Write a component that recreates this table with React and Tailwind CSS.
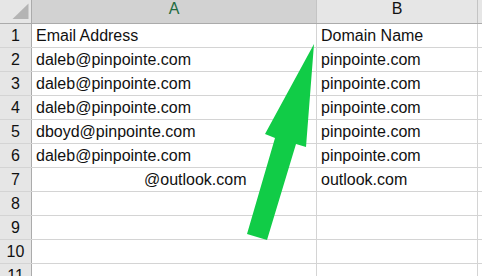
import React from 'react';

const rows = [
  { n: 1, a: 'Email Address', b: 'Domain Name' },
  { n: 2, a: 'daleb@pinpointe.com', b: 'pinpointe.com' },
  { n: 3, a: 'daleb@pinpointe.com', b: 'pinpointe.com' },
  { n: 4, a: 'daleb@pinpointe.com', b: 'pinpointe.com' },
  { n: 5, a: 'dboyd@pinpointe.com', b: 'pinpointe.com' },
  { n: 6, a: 'daleb@pinpointe.com', b: 'pinpointe.com' },
  { n: 7, a: '@outlook.com', b: 'outlook.com', pad: true },
  { n: 8 },
  { n: 9 },
  { n: 10 },
  { n: 11 },
];

const App = () => {
  return (
    <div
      className="relative w-[482px] h-[276px] overflow-hidden bg-white text-[16px] text-[#111]"
      style={{ fontFamily: '"Liberation Sans", Arial, sans-serif' }}
    >
      {/* column headers */}
      <div className="flex h-[24px] border-b border-[#ababab]">
        <div className="relative w-[32px] shrink-0 bg-[#e6e6e6] border-r border-[#ababab]">
          <svg className="absolute left-0 top-0" width="31" height="23">
            <polygon points="12.5,19 28.5,3.5 28.5,19" fill="#b4b4b4" />
          </svg>
        </div>
        <div className="w-[285px] shrink-0 bg-[#d2d2d2] border-r border-[#c4c4c4] flex items-end justify-center pb-[2px] text-[#1e6b3f]">
          A
        </div>
        <div className="w-[161px] shrink-0 bg-[#e6e6e6] border-r border-[#c4c4c4] flex items-end justify-center pb-[2px]">
          B
        </div>
        <div className="flex-1 bg-[#e6e6e6]" />
      </div>

      {/* rows */}
      {rows.map((r) => (
        <div key={r.n} className="flex h-[24px] border-b border-[#d4d4d4]">
          <div className="w-[32px] shrink-0 bg-[#e6e6e6] border-r border-[#ababab] flex items-end justify-center pb-[3px] leading-none">
            {r.n}
          </div>
          <div
            className={`w-[285px] shrink-0 border-r border-[#d4d4d4] flex items-end pb-[3px] leading-none whitespace-nowrap ${
              r.pad ? 'pl-[112px]' : 'pl-[4px]'
            }`}
          >
            {r.a}
          </div>
          <div className="w-[161px] shrink-0 border-r border-[#d4d4d4] flex items-end pl-[4px] pb-[3px] leading-none whitespace-nowrap">
            {r.b}
          </div>
          <div className="flex-1" />
        </div>
      ))}

      {/* green arrow drawn over the sheet */}
      <svg className="absolute left-0 top-0 pointer-events-none" width="482" height="276">
        <polygon
          points="314,44 306,147 296,144 267,240 247,234 275,138 265,134"
          fill="#11cc47"
        />
      </svg>
    </div>
  );
};

export default App;
